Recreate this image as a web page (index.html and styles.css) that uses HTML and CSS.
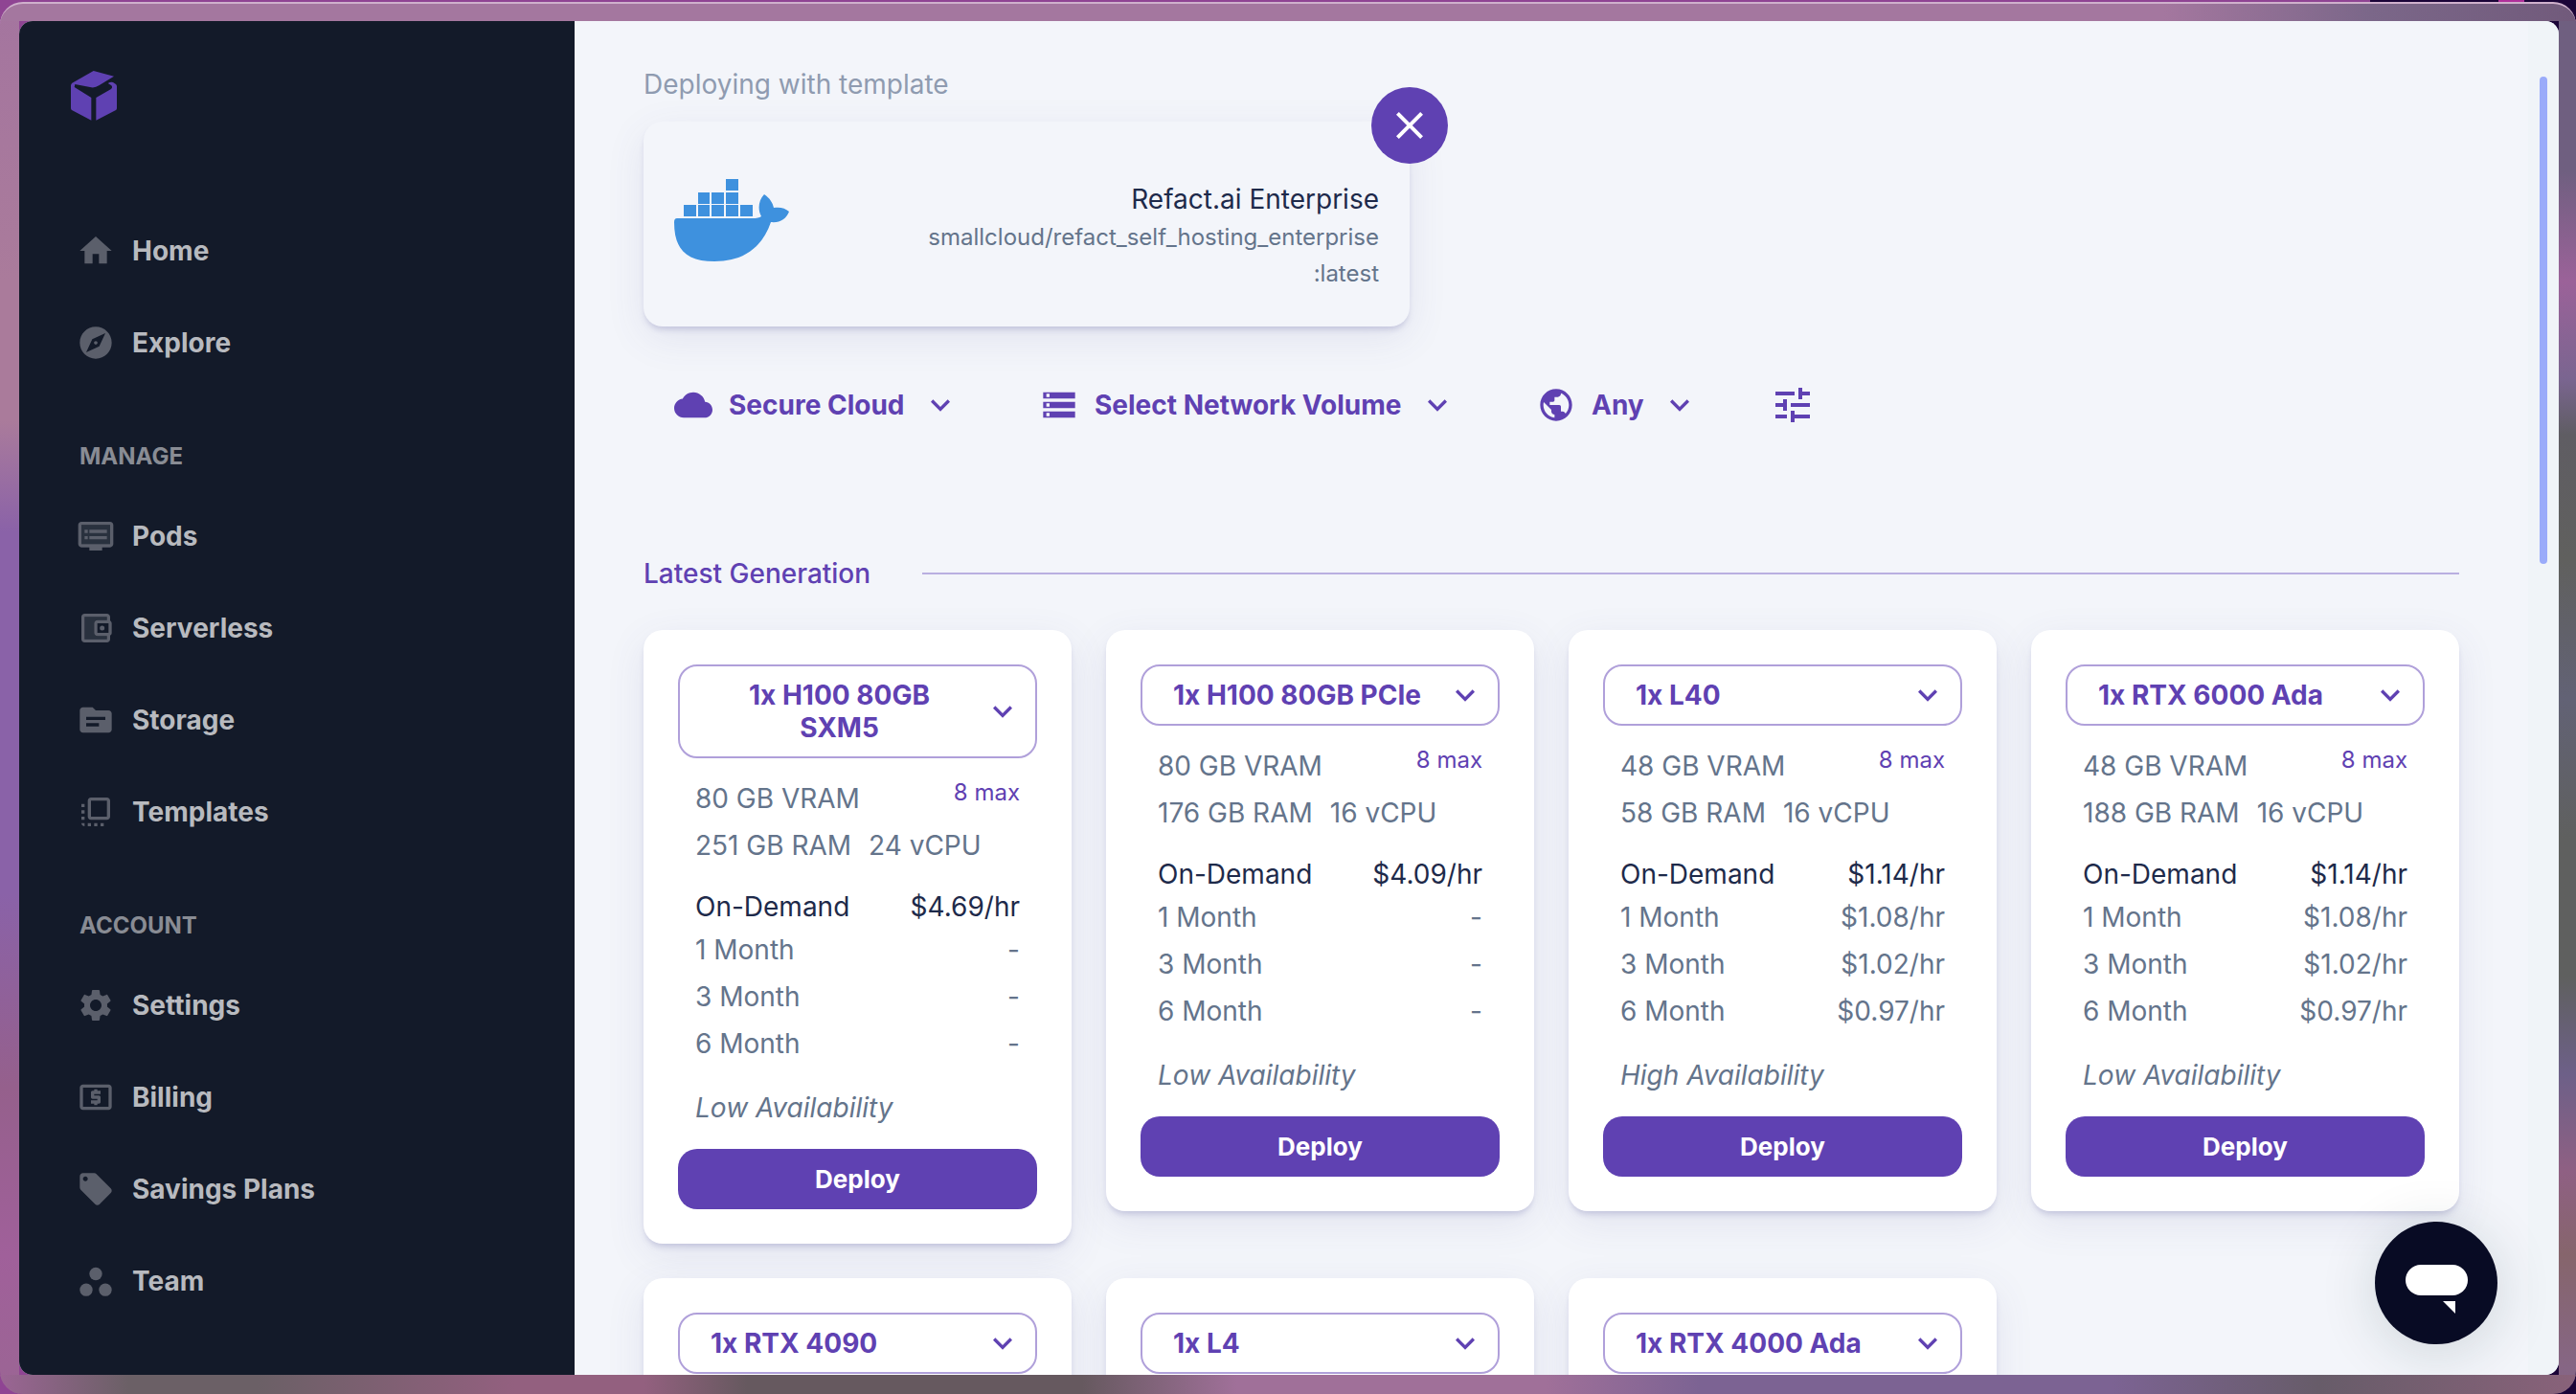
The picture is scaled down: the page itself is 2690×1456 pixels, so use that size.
FILE: index.html
```html
<!DOCTYPE html>
<html lang="en">
<head>
<meta charset="utf-8">
<meta name="viewport" content="width=device-width, initial-scale=1">
<title>Deploy a pod</title>
<link rel="stylesheet" href="styles.css">
</head>
<body>
<svg class="sprite" aria-hidden="true">
  <symbol id="chevron" viewBox="0 0 24 24"><path d="M7.41 8.59 12 13.17l4.59-4.58L18 10l-6 6-6-6z"/></symbol>
</svg>
<div class="frame">
  <div class="window">
    <aside class="sidebar">
      <a class="logo" href="#" aria-label="Console home">
        <svg viewBox="42 42 144 156" width="48" height="52"><path d="M113 42 177 59 130 88Q118 96 106 94L55 84 53 93 106 126V197L45 165Q42 163 42 159V88Q42 83 46 80ZM121 126 168 99Q174 94 169 88L158 81Q167 75 174 78L183 84Q186 87 186 91V159Q186 163 183 165L121 197Z"/></svg>
      </a>
      <nav class="nav">
        <a href="#"><svg viewBox="0 0 24 24"><path d="M10 20v-6h4v6h5v-8h3L12 3 2 12h3v8z"/></svg>Home</a>
        <a href="#"><svg viewBox="0 0 24 24"><path d="M12 10.9c-.61 0-1.1.49-1.1 1.1s.49 1.1 1.1 1.1c.61 0 1.1-.49 1.1-1.1s-.49-1.1-1.1-1.1zM12 2C6.48 2 2 6.48 2 12s4.48 10 10 10 10-4.48 10-10S17.52 2 12 2zm2.19 12.19L6 18l3.81-8.19L18 6l-3.81 8.19z"/></svg>Explore</a>
        <h2>MANAGE</h2>
        <a href="#"><svg viewBox="0 0 24 24"><path class="tint" d="M3 5h18v12H3z"/><path d="M21 3H3c-1.1 0-2 .9-2 2v12c0 1.1.9 2 2 2h5v2h8v-2h5c1.1 0 1.99-.9 1.99-2L23 5c0-1.1-.9-2-2-2zm0 14H3V5h18v12zm-2-9H8v2h11V8zm0 4H8v2h11v-2zM7 8H5v2h2V8zm0 4H5v2h2v-2z"/></svg>Pods</a>
        <a href="#"><svg viewBox="0 0 24 24"><path class="tint" d="M13 17c-1.1 0-2-.9-2-2V9c0-1.100.9-2 2-2h6V5H5v14h14v-2z"/><path d="M21 7.280V5c0-1.100-.9-2-2-2H5c-1.110 0-2 .9-2 2v14c0 1.100.89 2 2 2h14c1.100 0 2-.9 2-2v-2.280c.59-.35 1-.98 1-1.720V9c0-.74-.41-1.370-1-1.720zM20 9v6h-7V9h7zM5 19V5h14v2h-6c-1.100 0-2 .9-2 2v6c0 1.100.9 2 2 2h6v2H5z"/><circle cx="16" cy="12" r="1.500"/></svg>Serverless</a>
        <a href="#"><svg viewBox="0 0 24 24"><path d="M20 6h-8l-2-2H4c-1.100 0-1.990.9-1.990 2L2 18c0 1.100.9 2 2 2h16c1.100 0 2-.9 2-2V8c0-1.100-.9-2-2-2zm-6 10H6v-2h8v2zm4-4H6v-2h12v2z"/></svg>Storage</a>
        <a href="#"><svg viewBox="0 0 24 24"><path d="M3 13h2v-2H3v2zm0 4h2v-2H3v2zm2 4v-2H3c0 1.100.89 2 2 2zM3 9h2V7H3v2zm12 12h2v-2h-2v2zm4-18H9c-1.110 0-2 .9-2 2v10c0 1.100.89 2 2 2h10c1.100 0 2-.9 2-2V5c0-1.100-.9-2-2-2zm0 12H9V5h10v10zm-8 6h2v-2h-2v2zm-4 0h2v-2H7v2z"/></svg>Templates</a>
        <h2>ACCOUNT</h2>
        <a href="#"><svg viewBox="0 0 24 24"><path d="M19.140 12.940c.04-.3.060-.61.060-.94 0-.32-.02-.64-.07-.94l2.030-1.580c.18-.14.230-.41.120-.61l-1.920-3.320c-.12-.22-.37-.29-.59-.22l-2.390.96c-.5-.38-1.030-.7-1.620-.94l-.36-2.540c-.04-.24-.24-.41-.48-.41h-3.840c-.24 0-.43.170-.47.410l-.36 2.540c-.59.240-1.130.570-1.620.940l-2.390-.96c-.22-.08-.47 0-.59.220L2.740 8.870c-.12.210-.08.470.120.610l2.030 1.580c-.05.3-.09.630-.09.940s.02.640.070.940l-2.030 1.580c-.18.140-.23.410-.12.610l1.920 3.320c.12.220.37.290.59.220l2.390-.96c.5.380 1.030.7 1.620.940l.36 2.540c.05.240.24.410.48.410h3.840c.24 0 .44-.17.470-.41l.36-2.540c.59-.24 1.130-.56 1.620-.94l2.390.96c.22.080.47 0 .59-.22l1.920-3.320c.12-.22.070-.47-.12-.61l-2.010-1.580zM12 15.600c-1.980 0-3.600-1.620-3.600-3.600s1.620-3.600 3.600-3.600 3.600 1.620 3.600 3.600-1.620 3.600-3.600 3.600z"/></svg>Settings</a>
        <a href="#"><svg viewBox="0 0 24 24"><path d="M11 17h2v-1h1c.55 0 1-.45 1-1v-3c0-.55-.45-1-1-1h-3v-1h4V8h-2V7h-2v1h-1c-.55 0-1 .45-1 1v3c0 .55.450 1 1 1h3v1H9v2h2v1zm9-13H4c-1.110 0-1.990.89-1.990 2L2 18c0 1.110.89 2 2 2h16c1.110 0 2-.89 2-2V6c0-1.110-.89-2-2-2zm0 14H4V6h16v12z"/></svg>Billing</a>
        <a href="#"><svg viewBox="0 0 24 24"><path d="m21.410 11.580-9-9C12.050 2.220 11.550 2 11 2H4c-1.100 0-2 .9-2 2v7c0 .55.220 1.050.59 1.420l9 9c.36.360.86.580 1.410.580s1.050-.22 1.410-.59l7-7c.37-.36.590-.86.590-1.410s-.23-1.060-.59-1.420zM5.500 7C4.670 7 4 6.330 4 5.500S4.670 4 5.500 4 7 4.670 7 5.500 6.330 7 5.500 7z"/></svg>Savings Plans</a>
        <a href="#"><svg viewBox="0 0 24 24"><circle cx="6" cy="17.500" r="4"/><circle cx="18" cy="17.500" r="4"/><circle cx="12" cy="7.500" r="4"/></svg>Team</a>
      </nav>
    </aside>

    <main class="content">
      <p class="lead">Deploying with template</p>
      <section class="template">
        <svg class="whale" viewBox="0 0 120 86" width="120" height="86"><path d="M54 0h13v12H54zM25 14h12v12H25zM39 14h13v12H39zM54 14h13v12H54zM10 27h13v12H10zM25 27h12v12H25zM39 27h13v12H39zM54 27h13v12H54zM69 27h13v12H69zM3 41H82Q88 41 91 39C87 32 88 22 94 16C100 20 103 25 104 30C110 29 116 30 120 34C117 42 110 46 101 45C92 71 73 86 42 86C13 86 0 74 0 45Q0 41 3 41Z"/></svg>
        <div class="template-text">
          <p class="template-name">Refact.ai Enterprise</p>
          <p class="template-image">smallcloud/refact_self_hosting_enterprise<wbr>:latest</p>
        </div>
        <button class="close" type="button" aria-label="Remove template"><svg viewBox="0 0 24 24" width="48" height="48"><path d="M19 6.410 17.590 5 12 10.590 6.410 5 5 6.410 10.590 12 5 17.590 6.410 19 12 13.410 17.590 19 19 17.590 13.410 12z"/></svg></button>
      </section>

      <form class="filters">
        <div class="filter">
          <svg viewBox="0 0 24 24"><path d="M19.350 10.040C18.670 6.590 15.640 4 12 4 9.110 4 6.600 5.640 5.350 8.040 2.340 8.360 0 10.910 0 14c0 3.310 2.690 6 6 6h13c2.760 0 5-2.240 5-5 0-2.640-2.050-4.780-4.650-4.960z"/></svg>
          <select aria-label="Cloud type"><option>Secure Cloud</option></select>
          <svg><use href="#chevron"/></svg>
        </div>
        <div class="filter">
          <svg viewBox="0 0 24 24"><path d="M2 20h20v-4H2v4zm2-3h2v2H4v-2zM2 4v4h20V4H2zm4 3H4V5h2v2zm-4 7h20v-4H2v4zm2-3h2v2H4v-2z"/></svg>
          <select aria-label="Network volume"><option>Select Network Volume</option></select>
          <svg><use href="#chevron"/></svg>
        </div>
        <div class="filter">
          <svg viewBox="0 0 24 24"><path d="M12 2C6.480 2 2 6.480 2 12s4.480 10 10 10 10-4.480 10-10S17.520 2 12 2zm-1 17.930c-3.950-.49-7-3.850-7-7.930 0-.62.080-1.210.21-1.790L9 15v1c0 1.100.9 2 2 2v1.930zm6.900-2.540c-.26-.81-1-1.390-1.900-1.390h-1v-3c0-.55-.45-1-1-1H8v-2h2c.55 0 1-.45 1-1V7h2c1.100 0 2-.9 2-2v-.41c2.930 1.190 5 4.060 5 7.410 0 2.080-.8 3.970-2.100 5.390z"/></svg>
          <select aria-label="Region"><option>Any</option></select>
          <svg><use href="#chevron"/></svg>
        </div>
        <button class="tune" type="button" aria-label="More filters"><svg viewBox="0 0 24 24" width="48" height="48"><path d="M3 17v2h6v-2H3zM3 5v2h10V5H3zm10 16v-2h8v-2h-8v-2h-2v6h2zM7 9v2H3v2h4v2h2V9H7zm14 4v-2H11v2h10zm-6-4h2V7h4V5h-4V3h-2v6z"/></svg></button>
      </form>

      <h1 class="group">Latest Generation</h1>

      <div class="cards">
        <article class="card">
          <button class="picker-button" type="button" aria-haspopup="listbox"><span>1x H100 80GB SXM5</span><svg><use href="#chevron"/></svg></button>
          <div class="details">
            <div class="spec"><span>80 GB VRAM</span><small>8 max</small></div>
            <div class="spec"><span>251 GB RAM</span><span>24 vCPU</span></div>
            <table class="prices">
              <tr class="demand"><th scope="row">On-Demand</th><td>$4.69/hr</td></tr>
              <tr><th scope="row">1 Month</th><td>-</td></tr>
              <tr><th scope="row">3 Month</th><td>-</td></tr>
              <tr><th scope="row">6 Month</th><td>-</td></tr>
            </table>
            <p class="stock">Low Availability</p>
          </div>
          <button class="deploy" type="button">Deploy</button>
        </article>

        <article class="card">
          <div class="picker"><select aria-label="GPU count"><option>1x H100 80GB PCIe</option></select><svg><use href="#chevron"/></svg></div>
          <div class="details">
            <div class="spec"><span>80 GB VRAM</span><small>8 max</small></div>
            <div class="spec"><span>176 GB RAM</span><span>16 vCPU</span></div>
            <table class="prices">
              <tr class="demand"><th scope="row">On-Demand</th><td>$4.09/hr</td></tr>
              <tr><th scope="row">1 Month</th><td>-</td></tr>
              <tr><th scope="row">3 Month</th><td>-</td></tr>
              <tr><th scope="row">6 Month</th><td>-</td></tr>
            </table>
            <p class="stock">Low Availability</p>
          </div>
          <button class="deploy" type="button">Deploy</button>
        </article>

        <article class="card">
          <div class="picker"><select aria-label="GPU count"><option>1x L40</option></select><svg><use href="#chevron"/></svg></div>
          <div class="details">
            <div class="spec"><span>48 GB VRAM</span><small>8 max</small></div>
            <div class="spec"><span>58 GB RAM</span><span>16 vCPU</span></div>
            <table class="prices">
              <tr class="demand"><th scope="row">On-Demand</th><td>$1.14/hr</td></tr>
              <tr><th scope="row">1 Month</th><td>$1.08/hr</td></tr>
              <tr><th scope="row">3 Month</th><td>$1.02/hr</td></tr>
              <tr><th scope="row">6 Month</th><td>$0.97/hr</td></tr>
            </table>
            <p class="stock">High Availability</p>
          </div>
          <button class="deploy" type="button">Deploy</button>
        </article>

        <article class="card">
          <div class="picker"><select aria-label="GPU count"><option>1x RTX 6000 Ada</option></select><svg><use href="#chevron"/></svg></div>
          <div class="details">
            <div class="spec"><span>48 GB VRAM</span><small>8 max</small></div>
            <div class="spec"><span>188 GB RAM</span><span>16 vCPU</span></div>
            <table class="prices">
              <tr class="demand"><th scope="row">On-Demand</th><td>$1.14/hr</td></tr>
              <tr><th scope="row">1 Month</th><td>$1.08/hr</td></tr>
              <tr><th scope="row">3 Month</th><td>$1.02/hr</td></tr>
              <tr><th scope="row">6 Month</th><td>$0.97/hr</td></tr>
            </table>
            <p class="stock">Low Availability</p>
          </div>
          <button class="deploy" type="button">Deploy</button>
        </article>

        <article class="card">
          <div class="picker"><select aria-label="GPU count"><option>1x RTX 4090</option></select><svg><use href="#chevron"/></svg></div>
        </article>
        <article class="card">
          <div class="picker"><select aria-label="GPU count"><option>1x L4</option></select><svg><use href="#chevron"/></svg></div>
        </article>
        <article class="card">
          <div class="picker"><select aria-label="GPU count"><option>1x RTX 4000 Ada</option></select><svg><use href="#chevron"/></svg></div>
        </article>
      </div>
    </main>

    <div class="scroll-rail"><div class="scroll-thumb"></div></div>
    <button class="chat" type="button" aria-label="Open chat"><svg viewBox="0 0 128 128" width="128" height="128"><rect x="32" y="45" width="65" height="32" rx="16"/><path d="M71 83h13v13z"/></svg></button>
  </div>
</div>
</body>
</html>
```
FILE: styles.css
```css
* {
  box-sizing: border-box;
}

body {
  height: 100vh;
  margin: 0;
  padding-top: 2px;
  font-family: Inter, "Liberation Sans", sans-serif;
  font-size: 28px;
  line-height: 42px;
  color: #64748b;
  background: linear-gradient(90deg, #8f4493 0 92%, #1b0438 92% 97%, #b0309a 97% 98%, #1b0438 98%);
}

h1,
h2,
p {
  margin: 0;
}

button,
select {
  margin: 0;
  padding: 0;
  border: 0;
  background: none;
  color: inherit;
  font: inherit;
  cursor: pointer;
}

select {
  appearance: none;
}

svg {
  display: block;
  flex: none;
  fill: currentColor;
}

.sprite {
  position: absolute;
  width: 0;
  height: 0;
}

/* desktop showing round the window */
.frame {
  height: 100%;
  padding: 18px 18px 20px 20px;
  border-top: 2px solid #cfb0cc;
  border-radius: 24px;
  background:
    linear-gradient(90deg, #a4779f 0 84%, #7b6789 92%, #715a7b) top / 100% 18px no-repeat,
    linear-gradient(90deg, #9b6594 0, #6b6066 5% 10%, #93607f 20% 25%, #66595f 29% 42%, #a07099 48% 60%, #7c6393 66% 82%, #675c69 90%, #89627a) bottom / 100% 20px no-repeat,
    linear-gradient(180deg, #a4759f, #aa7b9b 20% 30%, #8a62a8 38% 64%, #95608c 78%, #a0609a 90%, #9b6594) left / 20px 100% no-repeat,
    linear-gradient(180deg, #6f5f80 0 12%, #9b6299 20%, #7a6590 27%, #5f5d63 31%, #60605e 40%, #626275 50%, #5f605f 60% 70%, #6d6088 77%, #8f6083 84%, #86656c 90%, #86668a) right / 18px 100% no-repeat;
}

.window {
  position: relative;
  display: flex;
  height: 100%;
  overflow: hidden;
  border-radius: 14px;
  background: #f3f5fa;
}

.sidebar {
  flex: 0 0 580px;
  padding: 52px 54px 0;
  background: #131a29;
}

.logo {
  display: block;
  width: 48px;
  margin-bottom: 88px;
  color: #5f41b2;
}

.nav a {
  display: flex;
  align-items: center;
  gap: 18px;
  height: 96px;
  padding-left: 6px;
  color: #b8babf;
  font-weight: 700;
  text-decoration: none;
}

.nav svg {
  width: 40px;
  height: 40px;
  fill: #5b5f6b;
}

.nav .tint {
  fill: #29313e;
}

.nav h2 {
  padding: 53px 0 17px 9px;
  font-size: 24px;
  font-weight: 700;
  line-height: 36px;
  color: #898c94;
}

.content {
  flex: 1;
  min-width: 0;
  padding: 45px 72px 0;
  overflow: hidden;
}

.lead {
  color: #8f9bb0;
}

.template {
  position: relative;
  display: flex;
  justify-content: space-between;
  width: 800px;
  height: 214px;
  margin-top: 18px;
  padding: 60px 32px 0;
  border-radius: 20px;
  box-shadow: 0 5px 6px -2px rgba(80, 80, 150, 0.24), 0 12px 40px rgba(80, 80, 150, 0.1);
}

.whale {
  color: #3e91de;
}

.template-text {
  max-width: 480px;
  text-align: right;
}

.template-name {
  color: #1e2a4a;
}

.template-image {
  font-size: 24px;
  line-height: 38px;
}

.close {
  position: absolute;
  top: -36px;
  right: -40px;
  display: grid;
  place-items: center;
  width: 80px;
  height: 80px;
  border-radius: 50%;
  background: #5f41b2;
  color: #fff;
}

.filters {
  display: flex;
  align-items: center;
  gap: 84px;
  height: 64px;
  margin-top: 50px;
  padding-left: 32px;
  color: #5f41b2;
}

.filter {
  display: flex;
  align-items: center;
  gap: 17px;
  font-weight: 700;
}

.filter svg,
.picker svg,
.picker-button svg {
  width: 40px;
  height: 40px;
}

.tune {
  margin-left: -10px;
}

.group {
  display: flex;
  align-items: center;
  gap: 54px;
  margin: 123px 0 38px;
  font-size: 28px;
  font-weight: 500;
  color: #5f41b2;
}

.group::after {
  content: "";
  flex: 1;
  height: 2px;
  background: #b9afe0;
}

.cards {
  display: grid;
  grid-template-columns: repeat(4, minmax(0, 1fr));
  align-items: start;
  gap: 36px;
}

.card {
  padding: 36px;
  border-radius: 20px;
  background: #fff;
  box-shadow: 0 5px 6px -2px rgba(80, 80, 150, 0.24), 0 12px 40px rgba(80, 80, 150, 0.1);
}

.picker {
  display: grid;
  align-items: center;
  color: #5f41b2;
}

.picker > * {
  grid-area: 1 / 1;
}

.picker svg {
  justify-self: end;
  margin-right: 16px;
  pointer-events: none;
}

.picker select,
.picker-button {
  width: 100%;
  min-height: 64px;
  border: 2px solid #b0a0da;
  border-radius: 20px;
  font-weight: 700;
  line-height: 34px;
  color: #5f41b2;
}

.picker select {
  padding: 0 60px 0 32px;
}

.picker-button {
  display: flex;
  align-items: center;
  gap: 16px;
  padding: 13px 14px 13px 32px;
}

.picker-button span {
  flex: 1;
}

.details {
  padding: 18px;
}

.spec {
  display: flex;
  gap: 18px;
  line-height: 49px;
}

.spec small {
  margin-left: auto;
  font-size: 24px;
  line-height: 35px;
  color: #5f41b2;
}

.prices {
  width: 100%;
  margin-top: 19px;
  border-collapse: collapse;
  line-height: 49px;
}

.prices th,
.prices td {
  padding: 0;
  font-weight: 400;
  text-align: left;
}

.prices td {
  text-align: right;
}

.prices .demand {
  line-height: 41px;
  color: #1e2a4a;
}

.stock {
  margin-top: 18px;
  font-style: italic;
  line-height: 49px;
}

.deploy {
  width: 100%;
  height: 63px;
  border-radius: 20px;
  background: #5f41b2;
  color: #fff;
  font-size: 26px;
  font-weight: 700;
}

.scroll-rail {
  flex: 0 0 32px;
  padding: 58px 12px 0;
  background: #f0f4f8;
}

.scroll-thumb {
  height: 37.5%;
  border-radius: 4px;
  background: #9aabfa;
}

.chat {
  position: absolute;
  right: 64px;
  bottom: 32px;
  border-radius: 50%;
  background: #080b24;
  color: #fff;
  box-shadow: 0 8px 60px rgba(20, 50, 50, 0.16);
}
```
